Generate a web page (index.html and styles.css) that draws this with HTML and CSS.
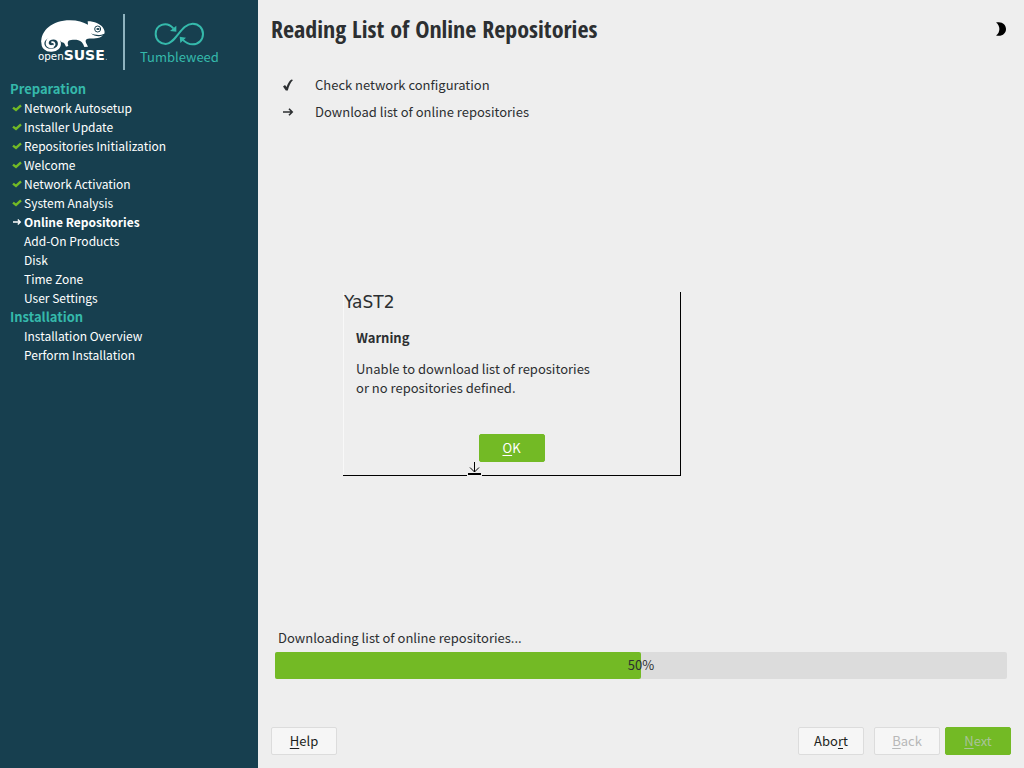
FILE: index.html
```html
<!DOCTYPE html>
<html lang="en">
<head>
    <meta charset="UTF-8">
    <meta name="viewport" content="width=device-width, initial-scale=1.0">
    <title>YaST2</title>
    <link rel="stylesheet" href="styles.css">
</head>
<body>
    <svg class="defs" aria-hidden="true">
        <symbol id="check" viewBox="0 0 10 8"><path d="M1 3.600 L4 6 L9 1.400" fill="none" stroke="#73ba25" stroke-width="2.400"/></symbol>
        <symbol id="arrow" viewBox="0 0 12 10"><path d="M1 5 H10 M7 1.8 L10.2 5 L7 8.2" fill="none" stroke="currentColor" stroke-width="1.6"/></symbol>
    </svg>
    <aside class="sidebar">
        <div class="logo">
            <svg class="opensuse" viewBox="114 58 210 135" role="img" aria-label="openSUSE">
                <path fill="#fff" d="M124 128 C122 94 156 62 210 62 C233 62 250 68 264 75 L263 65 C283 65 301 73 308 83 C314 91 315 99 313 102 C301 108 286 107 272 101 C283 111 299 112 309 107 C298 120 278 115 264 117 C255 119 256 126 260 133 L264 141 L253 142 C249 130 243 124 235 122 C225 119 212 121 206 123 C202 127 203 133 205 139 L198 141 C194 132 192 128 185 128 C176 112 140 106 132 130 Z"/>
                <path fill="none" stroke="#fff" stroke-width="9" d="M129 123 C126 144 140 153 155 152 C171 151 180 141 178 129 C175 111 147 111 142 127 C139 139 152 144 160 139"/>
                <path fill="none" stroke="#fff" stroke-width="5" d="M158 141 C168 136 164 125 154 128"/>
                <circle cx="293" cy="88" r="9" fill="#fff" stroke="#173f4f" stroke-width="3"/>
                <ellipse cx="294" cy="88" rx="5" ry="3" fill="#173f4f"/>
                <text class="open" x="114" y="181">open</text>
                <text class="suse" x="191" y="181">SUSE</text>
                <circle cx="319" cy="179" r="2" fill="#9fb3bc"/>
            </svg>
            <span class="divider"></span>
            <div class="product">
                <svg class="loop" viewBox="462 62 156 78" aria-hidden="true">
                    <path fill="none" stroke="#35b9ab" stroke-width="6" d="M523 84 C501 60 470 75 470 101 C470 119 484 131 500 131 C530 131 546 70 581 70 C600 70 612 84 612 101 C612 118 600 132 581 132 C567 132 559 126 550 117"/>
                    <path fill="#35b9ab" d="M532 76 L532 94 L513 92 Z M542 109 L561 112 L544 128 Z"/>
                </svg>
                <span>Tumbleweed</span>
            </div>
        </div>
        <h2>Preparation</h2>
        <ul>
            <li><svg><use href="#check"/></svg>Network Autosetup</li>
            <li><svg><use href="#check"/></svg>Installer Update</li>
            <li><svg><use href="#check"/></svg>Repositories Initialization</li>
            <li><svg><use href="#check"/></svg>Welcome</li>
            <li><svg><use href="#check"/></svg>Network Activation</li>
            <li><svg><use href="#check"/></svg>System Analysis</li>
            <li class="current"><svg><use href="#arrow"/></svg>Online Repositories</li>
            <li>Add-On Products</li>
            <li>Disk</li>
            <li>Time Zone</li>
            <li>User Settings</li>
        </ul>
        <h2>Installation</h2>
        <ul>
            <li>Installation Overview</li>
            <li>Perform Installation</li>
        </ul>
    </aside>

    <main>
        <header>
            <h1>Reading List of Online Repositories</h1>
            <button class="theme" aria-label="Change theme">
                <svg viewBox="0 0 12 14"><path d="M1 0.5 C7 -1 11 2.500 11 7 C11 11.500 7 15 1 13.500 C5.500 10.500 5.500 3.500 1 0.500 Z" fill="#000"/></svg>
            </button>
        </header>
        <ul class="steps">
            <li><svg viewBox="0 0 12 12"><path d="M1 7.500 L3 6 L4.600 8 C6 4 7.500 1.500 9.500 0.500 L11 1 C8.500 3.500 7 7 5.800 11.500 L3.800 11.500 Z" fill="#2c2f31"/></svg>Check network configuration</li>
            <li><svg viewBox="0 0 12 10"><use href="#arrow"/></svg>Download list of online repositories</li>
        </ul>
        <div class="progress">
            <div class="label" id="progress-label">Downloading list of online repositories...</div>
            <div class="bar" role="progressbar" aria-labelledby="progress-label" aria-valuenow="50">
                <div class="fill" style="width: 50%"></div>
                <span>50%</span>
            </div>
        </div>
        <footer>
            <button><u>H</u>elp</button>
            <div class="nav">
                <button class="abort">Abo<u>r</u>t</button>
                <button disabled><u>B</u>ack</button>
                <button class="primary" disabled><u>N</u>ext</button>
            </div>
        </footer>
    </main>

    <dialog open>
        <div class="title">YaST2</div>
        <div class="message">
            <h3>Warning</h3>
            <p>Unable to download list of repositories<br>or no repositories defined.</p>
            <button class="primary"><u>O</u>K</button>
        </div>
        <svg class="cursor" viewBox="0 0 15 15" aria-hidden="true">
            <path d="M0 12 H15 V15 H0 Z" fill="#eee"/>
            <path d="M7.500 1 V11 M3 6.500 L7.500 11 L12 6.500" fill="none" stroke="#000"/>
            <path d="M1 12 H14 V14 H1 Z" fill="#000"/>
        </svg>
    </dialog>
</body>
</html>
```
FILE: styles.css
```css
*{
    box-sizing: border-box;
}
body{
    margin: 0;
    min-height: 100vh;
    display: flex;
    background: #eee;
    color: #2c2f31;
    font-family: "Source Sans Pro", "Noto Sans CJK SC", sans-serif;
    font-size: 13px;
    line-height: 19px;
}
h1, h2, h3, p, ul{
    margin: 0;
    padding: 0;
}
ul{
    list-style: none;
}
.defs{
    display: none;
}

/* sidebar */
.sidebar{
    flex: 0 0 258px;
    background: #173f4f;
    color: #fff;
}
.logo{
    display: flex;
    height: 79px;
    padding: 14px 0 9px 38px;
}
.opensuse{
    width: 70px;
    height: 45px;
    margin-top: 5px;
}
.opensuse text{
    fill: #fff;
    font-family: "DejaVu Sans", sans-serif;
}
.opensuse .open{
    font-size: 31px;
}
.opensuse .suse{
    font-size: 42px;
    font-weight: bold;
}
.divider{
    width: 2px;
    margin: 0 15px;
    background: #8fb3bf;
}
.product{
    display: flex;
    flex-direction: column;
    align-items: center;
    padding-top: 7px;
    color: #35b9ab;
    font-size: 13px;
}
.loop{
    width: 52px;
    height: 26px;
}
.sidebar h2{
    padding-left: 10px;
    font-size: 13px;
    line-height: 19px;
    color: #35b9ab;
}
.sidebar li{
    position: relative;
    padding-left: 24px;
    font-size: 12px;
}
.sidebar li svg{
    position: absolute;
    left: 12px;
    top: 6px;
    width: 10px;
    height: 8px;
}
.sidebar .current{
    font-weight: bold;
}

/* main area */
main{
    flex: 1;
    display: flex;
    flex-direction: column;
    padding: 12px 13px 13px;
}
header{
    display: flex;
    justify-content: space-between;
    align-items: center;
    height: 34px;
}
h1{
    font-family: "Open Sans Condensed", "Noto Sans Condensed", "Liberation Sans Narrow", "Roboto Condensed", sans-serif;
    font-size: 24px;
    line-height: 34px;
    white-space: nowrap;
}
.steps{
    flex: 1;
    padding: 25px 11px;
}
.steps li{
    display: flex;
    align-items: center;
    gap: 21px;
    height: 27px;
}
.steps svg{
    width: 12px;
    height: 12px;
}
.progress{
    padding: 0 4px;
}
.label{
    padding-left: 3px;
    margin-bottom: 5px;
}
.bar{
    position: relative;
    height: 27px;
    border-radius: 2px;
    background: #dcdcdc;
}
.fill{
    height: 100%;
    border-radius: 2px;
    background: #73ba25;
}
.bar span{
    position: absolute;
    inset: 0;
    text-align: center;
    line-height: 25px;
}
footer{
    display: flex;
    justify-content: space-between;
    margin-top: 48px;
}
.nav{
    display: flex;
    gap: 5px;
}
.abort{
    margin-right: 5px;
}
button{
    width: 66px;
    height: 28px;
    padding: 0 0 2px;
    border: 1px solid #dcdcdc;
    border-radius: 2px;
    background: #f6f6f6;
    color: #1c1f21;
    font: inherit;
}
button:disabled{
    color: #b8b8b8;
}
button.primary{
    border-color: #73ba25;
    background: #73ba25;
    color: #fff;
}
button.primary:disabled{
    color: #a9c39a;
}
u{
    text-underline-offset: 2px;
}
.theme{
    display: flex;
    justify-content: center;
    align-items: center;
    width: 20px;
    height: 28px;
    padding: 0;
    border: 0;
    background: none;
}
.theme svg{
    width: 12px;
    height: 14px;
}

/* warning popup */
dialog{
    position: fixed;
    inset: 0;
    width: 338px;
    height: fit-content;
    margin: auto;
    padding: 0;
    border: solid #000;
    border-width: 0 1px 1px 0;
    box-shadow: inset 1px 0 #f8f8f8;
    background: #eee;
    color: #2c2f31;
}
.title{
    padding-left: 1px;
    font-family: "DejaVu Sans", sans-serif;
    font-size: 17px;
    line-height: 21px;
}
.message{
    display: flex;
    flex-direction: column;
    padding: 15px 13px 13px;
}
.message h3{
    font-size: 13px;
    line-height: 19px;
}
.message p{
    margin: 12px 0 37px;
}
.message button{
    align-self: center;
}
.cursor{
    position: absolute;
    left: 124px;
    bottom: -1px;
    width: 15px;
    height: 15px;
}
```
